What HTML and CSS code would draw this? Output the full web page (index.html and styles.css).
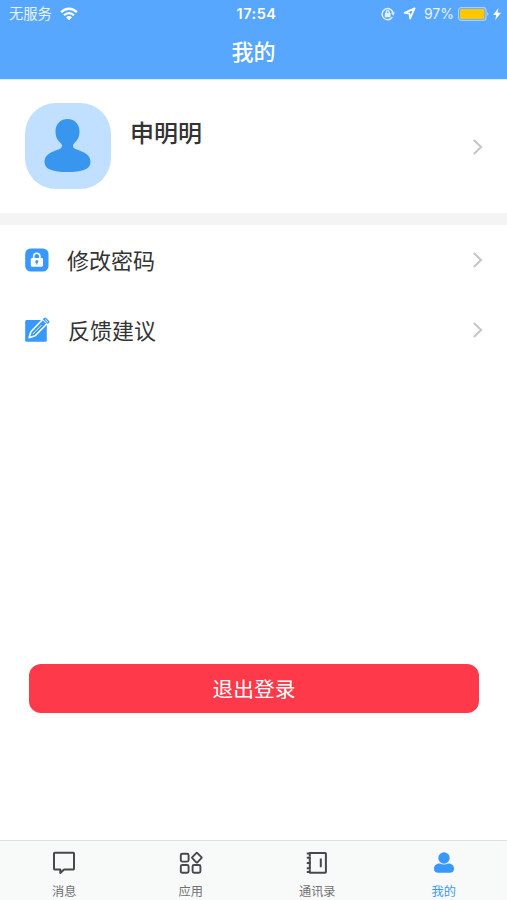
FILE: index.html
```html
<!DOCTYPE html>
<html lang="zh-CN">
<head>
  <meta charset="UTF-8">
  <meta name="viewport" content="width=device-width, initial-scale=1.0">
  <title>我的</title>
  <link rel="stylesheet" href="styles.css">
</head>
<body>

<div class="page">
  <header class="header">
    <div class="status-bar">
      <div class="status-left">
        <span class="carrier">无服务</span>
        <svg class="wifi" width="18" height="14" viewBox="0 0 18 14" fill="none" stroke="#fff" stroke-width="2.3">
          <path d="M1.2 5.2C5.5.6 12.5.6 16.8 5.2"/>
          <path d="M4 8.2c2.8-2.900 7.200-2.900 10 0"/>
          <path d="M9 13.2L6 10.300c1.700-1.600 4.300-1.600 6 0z" fill="#fff" stroke="none"/>
        </svg>
      </div>
      <span class="time">17:54</span>
      <div class="status-right">
        <svg class="rotate-lock" width="14" height="14" viewBox="0 0 14 14" fill="none" stroke="#e4f1ff" stroke-width="1.4">
          <path d="M11.400 10.200A5.600 5.600 0 1 1 12.200 6"/>
          <path d="M10 5.600h4l-1.900 3.200z" fill="#e4f1ff" stroke="none"/>
          <rect x="3.800" y="6" width="5.800" height="4.200" rx=".5" fill="#e4f1ff" stroke="none"/>
          <path d="M5.200 6.500V5.200a1.500 1.500 0 0 1 3 0v1.300"/>
        </svg>
        <svg class="location" width="13" height="13" viewBox="0 0 13 13" fill="none" stroke="#fff" stroke-width="1.800" stroke-linejoin="round">
          <path d="M11.600 1.400L1.600 5.900l4.900.7.600 4.900z"/>
        </svg>
        <span class="percent">97%</span>
        <svg class="battery" width="31" height="14" viewBox="0 0 31 14">
          <rect x=".6" y=".6" width="27.400" height="12.800" rx="2.600" fill="none" stroke="#a9d1ff" stroke-width="1.200"/>
          <rect x="2" y="2" width="24.500" height="10" rx="1.200" fill="#fec700"/>
          <path d="M29.200 5c1.600.6 1.600 3.400 0 4z" fill="#a9d1ff"/>
        </svg>
        <svg class="bolt" width="8" height="12" viewBox="0 0 8 12" fill="#fff">
          <path d="M5.500 0L0 6.900h3.200L2.300 12l5.700-7.200H4.700z"/>
        </svg>
      </div>
    </div>
    <h1 class="title">我的</h1>
  </header>

  <section class="profile">
    <div class="avatar">
      <svg width="86" height="86" viewBox="0 0 86 86" fill="#3896ef">
        <path d="M42.500 16C35 16 30.500 21.500 30.500 28.500C30.500 34.500 33 37.500 36 40.500C38 43 37 45 34 46.200C26 49 19.500 51.500 19.500 59C19.500 66.500 28 69 42.500 69C57 69 65.500 66.500 65.500 59C65.500 51.500 59 49 51 46.200C48 45 47 43 49 40.500C52 37.500 54.500 34.500 54.500 28.500C54.500 21.500 50 16 42.500 16Z"/>
      </svg>
    </div>
    <div class="name">申明明</div>
    <svg class="arrow" width="10" height="16" viewBox="0 0 10 16"><path d="M.8 1l7.300 7-7.300 7"/></svg>
  </section>

  <nav class="menu">
    <div class="menu-item">
      <svg class="menu-icon" width="26" height="26" viewBox="0 0 26 26">
        <rect x="1.200" y="1.500" width="23.300" height="23" rx="5.500" fill="#3898fb"/>
        <path d="M9.700 12V9.300a3.100 3.100 0 0 1 6.200 0V12" fill="none" stroke="#fff" stroke-width="1.600"/>
        <rect x="6.800" y="11" width="12.200" height="8.800" rx="1.200" fill="#fff"/>
        <circle cx="12.800" cy="14.500" r="1.500" fill="#3898fb"/>
        <path d="M12.200 14.500h1.200v3h-1.200z" fill="#3898fb"/>
      </svg>
      <span class="menu-text">修改密码</span>
      <svg class="arrow" width="10" height="16" viewBox="0 0 10 16"><path d="M.8 1l7.300 7-7.300 7"/></svg>
    </div>
    <div class="menu-item">
      <svg class="menu-icon" width="26" height="26" viewBox="0 0 26 26">
        <rect x="1.200" y="3" width="21.600" height="21.800" rx="1.500" fill="#3898fb"/>
        <path d="M5.100 20.700l1.800-6L18.800 2.300l4.400 4.200-12 12.300z" fill="#3898fb" stroke="#fff" stroke-width="1.600" stroke-linejoin="round"/>
        <path d="M18.800 2.300l1.300-1.300q1-.8 2 0l3 2.900q.8.900 0 1.900l-1.400 1.300z" fill="#3898fb"/>
        <path d="M21 2.300l3 2.900M8.900 17L17.500 8.100" fill="none" stroke="#fff" stroke-width=".9"/>
      </svg>
      <span class="menu-text feedback">反馈建议</span>
      <svg class="arrow" width="10" height="16" viewBox="0 0 10 16"><path d="M.8 1l7.300 7-7.300 7"/></svg>
    </div>
  </nav>

  <button class="logout" type="button">退出登录</button>

  <footer class="tab-bar">
    <div class="tab">
      <svg width="24" height="24" viewBox="0 0 24 24" fill="none" stroke="#45494d" stroke-width="2" stroke-linejoin="round">
        <path d="M2.700 1.800h18.600q.7 0 .7.700v15.300q0 .7-.7.700h-9.200L8.300 22v-3.500H2.700q-.7 0-.7-.7V2.500q0-.7.700-.7z"/>
      </svg>
      <span>消息</span>
    </div>
    <div class="tab">
      <svg width="24" height="24" viewBox="0 0 24 24" fill="none" stroke="#45494d" stroke-width="1.900" stroke-linejoin="round">
        <rect x="1.800" y="2.800" width="7.800" height="7.800" rx="1.500"/>
        <rect x="1.800" y="14" width="7.800" height="7.800" rx="1.500"/>
        <rect x="13.600" y="14" width="7.800" height="7.800" rx="1.500"/>
        <path d="M17.300 2.100q.6-.5 1.100 0l4 4.100q.5.500 0 1l-4 4.100q-.5.500-1.100 0l-4-4.100q-.5-.5 0-1z"/>
      </svg>
      <span>应用</span>
    </div>
    <div class="tab">
      <svg width="24" height="24" viewBox="0 0 24 24" fill="none" stroke="#45494d" stroke-width="2" stroke-linejoin="round">
        <path d="M4.800 5.800V1.900h15.400q.7 0 .7.700v18.500q0 .7-.7.700H4.800v-3.600M4.800 6.800v10.400"/>
        <path d="M1.800 2.600h3M1.800 6.800h4M1.800 12h4M1.800 17.200h4M1.800 21.100h3M15.800 7.500v8.800"/>
      </svg>
      <span>通讯录</span>
    </div>
    <div class="tab active">
      <svg width="24" height="24" viewBox="0 0 24 24" fill="#3898fb">
        <circle cx="12" cy="7" r="5.700"/>
        <path d="M8 12.400q4 2 8 0c3.600 0 6 2 6 5.100 0 2.900-1.500 4.300-4.300 4.300H6.300C3.500 21.800 2 20.400 2 17.500c0-3.100 2.400-5.100 6-5.100z"/>
      </svg>
      <span>我的</span>
    </div>
  </footer>
</div>

</body>
</html>
```

FILE: styles.css
```css
body {
  margin: 0;
  font-family: "Noto Sans CJK SC", sans-serif;
  background: #fff;
  color: #333;
}

.page {
  display: flex;
  flex-direction: column;
  height: 900px;
  overflow: hidden;
}

.header {
  height: 80px;
  background: #57a6ff;
  border-bottom: 1px solid #d5edff;
  box-sizing: border-box;
  color: #fff;
}

.status-bar {
  display: flex;
  align-items: center;
  height: 27px;
  padding: 0 6px 0 9px;
}

.status-left,
.status-right {
  display: flex;
  align-items: center;
  flex: 1;
}

.status-right {
  justify-content: flex-end;
}

.carrier {
  margin-top: -2px;
  font-size: 14.3px;
  color: #e9f4ff;
}

.wifi {
  margin-left: 8px;
}

.time {
  margin-left: 3px;
  font-family: Inter, sans-serif;
  font-size: 14.5px;
  font-weight: 600;
  line-height: 27px;
  letter-spacing: 0.5px;
}

.location {
  margin-left: 8px;
}

.percent {
  margin-left: 8px;
  font-family: Inter, sans-serif;
  font-size: 14px;
  color: #e9f4ff;
}

.battery {
  margin-left: 4px;
}

.bolt {
  margin-left: 4px;
}

.title {
  margin: 0;
  font-size: 22px;
  font-weight: 500;
  line-height: 46px;
  text-align: center;
}

.profile {
  display: flex;
  align-items: center;
  height: 133px;
  padding: 0 24px 0 25px;
  border-bottom: 12px solid #f4f4f4;
}

.avatar {
  width: 86px;
  height: 86px;
  margin-top: -1px;
  border-radius: 31px;
  background: #c1dfff;
}

.avatar svg {
  display: block;
}

.name {
  flex: 1;
  align-self: flex-start;
  margin: 34px 0 0 19px;
  font-size: 24px;
  font-weight: 500;
  line-height: 36px;
}

.arrow {
  fill: none;
  stroke: #c5c5c5;
  stroke-width: 2;
}

.menu-item {
  display: flex;
  align-items: center;
  height: 70px;
  padding: 0 24px 0 24px;
}

.menu-text {
  flex: 1;
  margin: -2px 0 0 17px;
  font-size: 22px;
}

.menu-text.feedback {
  margin-left: 18px;
}

.logout {
  height: 49px;
  margin: 299px 28px 0 29px;
  padding: 0 0 2px;
  border: none;
  border-radius: 12px;
  background: #fd394a;
  color: #fff;
  font-family: inherit;
  font-size: 20.7px;
  cursor: pointer;
}

.tab-bar {
  display: flex;
  height: 60px;
  margin-top: auto;
  padding-left: 1px;
  border-top: 1px solid #e1e2e2;
  box-sizing: border-box;
  background: #f8f9f9;
}

.tab {
  display: flex;
  flex: 1;
  flex-direction: column;
  align-items: center;
  padding-top: 10px;
  font-size: 12.2px;
  line-height: 18px;
  color: #717171;
}

.tab span {
  margin-top: 7px;
}

.tab.active {
  color: #3898fb;
}
```
